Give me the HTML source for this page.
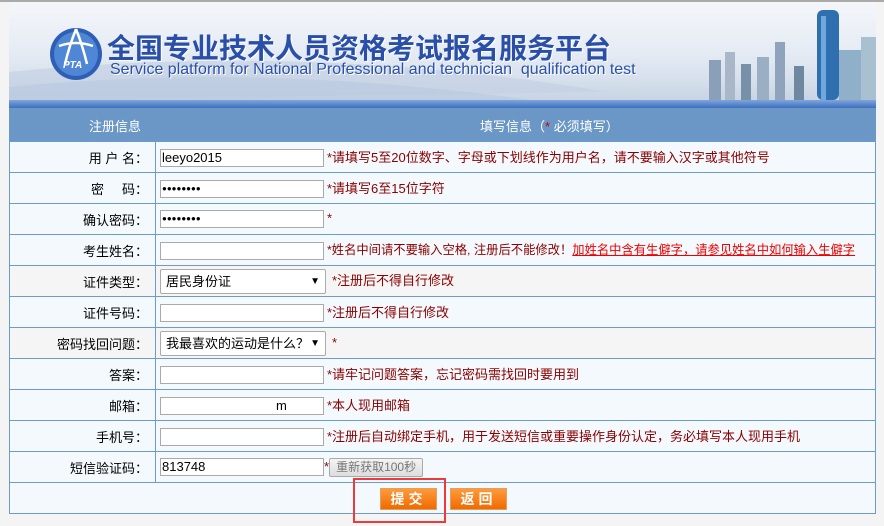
<!DOCTYPE html>
<html><head><meta charset="utf-8"><style>
*{margin:0;padding:0;box-sizing:border-box}
body{width:884px;height:526px;background:#f4f4f4;font-family:"Liberation Sans","Noto Sans CJK SC",sans-serif;font-size:13px;position:relative;overflow:hidden}
#top{position:absolute;left:0;top:0;width:884px;height:2px;background:#aaa}
#ban{position:absolute;left:9px;top:2px;width:867px;height:98px;background:linear-gradient(180deg,#f4f6fa 0%,#e6ecf4 50%,#d6e0ec 80%,#c8d4e4 100%);overflow:hidden}
#strip{position:absolute;left:9px;top:100px;width:867px;height:8px;background:linear-gradient(#7fa6dc,#3e6fc0)}
#hdr{position:absolute;left:9px;top:108px;width:867px;height:33px;background:#6a97c6;color:#fff;font-size:13px}
.t1{position:absolute;left:107px;top:27px;font-size:28px;font-weight:bold;color:#2a4fa8;text-shadow:1px 1px 0 #fff;white-space:nowrap}
.t2{position:absolute;left:110px;top:61px;font-size:16px;color:#2a4fa8;text-shadow:1px 1px 0 #fff;white-space:nowrap}
table{position:absolute;left:9px;top:141px;width:867px;border-collapse:collapse;table-layout:fixed}
td{border:1px solid #6c9bd0;height:31px;background:#f3f9fd;color:#000}
td.l{text-align:right;padding-right:7px}
td.r{padding-left:4px;color:#8b0000;white-space:nowrap;overflow:hidden}
.in{display:inline-block;width:164px;height:18px;border:1px solid #aaa;background:#fff;vertical-align:middle;font-size:13px;line-height:16px;padding-left:1px;color:#000;margin-right:3px}
.sel{display:inline-block;width:166px;height:25px;border:1px solid #aaa;border-radius:2px;background:#fff;vertical-align:middle;font-size:13px;line-height:23px;padding-left:5px;color:#000;position:relative;margin-right:6px}
.sel:after{content:"▼";position:absolute;right:5px;top:0;font-size:10px}
.btn{display:inline-block;height:19px;border:1px solid #aaa;border-radius:2px;background:linear-gradient(#f4f4f4,#ddd);color:#777;font-size:12px;line-height:17px;padding:0 6px;vertical-align:middle}
.ob{position:absolute;top:488px;height:22px;width:57px;background:linear-gradient(#ff9a3a,#f06a00);border:1px solid #e0a060;color:#fff;font-weight:bold;font-size:14px;text-align:center;line-height:20px;letter-spacing:4px}
</style></head><body>
<div id="top"></div>
<div id="ban">
<svg width="867" height="98" style="position:absolute;left:0;top:0">
<path d="M0 70 Q300 40 600 90 L0 98Z" fill="#c5d2e4" opacity=".7"/>
<path d="M0 85 Q250 60 520 98 L0 98Z" fill="#b8c8de" opacity=".6"/>
<rect x="700" y="58" width="12" height="40" fill="#8aa0b8"/><rect x="716" y="50" width="10" height="48" fill="#a8b8c8"/>
<rect x="732" y="62" width="10" height="36" fill="#7890a8"/><rect x="748" y="55" width="12" height="43" fill="#9aaec4"/>
<rect x="766" y="40" width="10" height="58" fill="#8fa4bc"/><rect x="785" y="64" width="10" height="34" fill="#6f879f"/>
<rect x="808" y="8" width="22" height="90" rx="6" fill="#2f6fb0"/><rect x="812" y="14" width="5" height="84" fill="#6fa8dc"/>
<rect x="830" y="48" width="22" height="50" fill="#8fb0c8"/><rect x="852" y="35" width="15" height="63" fill="#a8c0d0"/>
<circle cx="67" cy="52" r="26" fill="#2f5fb5"/><circle cx="67" cy="52" r="22" fill="#4f86d5"/>
<path d="M67 27 Q60 45 56 62 M67 27 Q74 45 78 62 M50 44 Q67 38 84 44" stroke="#fff" stroke-width="2.5" fill="none"/>
<text x="54" y="66" font-size="10" font-weight="bold" fill="#fff" font-family="Liberation Sans" font-style="italic">PTA</text>
</svg>
</div>
<div class="t1">全国专业技术人员资格考试报名服务平台</div>
<div class="t2">Service platform for National Professional and technician&nbsp; qualification test</div>
<div id="strip"></div>
<div id="hdr"><span style="position:absolute;left:80px;top:8px">注册信息</span><span style="position:absolute;left:471px;top:8px">填写信息（<span style="color:#c00">*</span> 必须填写）</span></div>
<table>
<colgroup><col style="width:146px"><col></colgroup>
<tr><td class="l">用&nbsp;户&nbsp;名：</td><td class="r"><span class="in">leeyo2015</span>*请填写5至20位数字、字母或下划线作为用户名，请不要输入汉字或其他符号</td></tr>
<tr><td class="l">密&nbsp;&nbsp;&nbsp;&nbsp;&nbsp;码：</td><td class="r"><span class="in" style="font-size:8px">●●●●●●●●</span>*请填写6至15位字符</td></tr>
<tr><td class="l">确认密码：</td><td class="r"><span class="in" style="font-size:8px">●●●●●●●●</span>*</td></tr>
<tr><td class="l">考生姓名：</td><td class="r" style="font-size:12.3px"><span class="in"></span>*姓名中间请不要输入空格, 注册后不能修改！<span style="color:#e00;text-decoration:underline">加姓名中含有生僻字，请参见姓名中如何输入生僻字</span></td></tr>
<tr><td class="l" style="background:#f5f5f5">证件类型：</td><td class="r" style="background:#f5f5f5"><span class="sel">居民身份证</span>*注册后不得自行修改</td></tr>
<tr><td class="l">证件号码：</td><td class="r"><span class="in"></span>*注册后不得自行修改</td></tr>
<tr><td class="l" style="background:#f5f5f5">密码找回问题：</td><td class="r" style="background:#f5f5f5"><span class="sel">我最喜欢的运动是什么？</span>*</td></tr>
<tr><td class="l">答案：</td><td class="r"><span class="in"></span>*请牢记问题答案，忘记密码需找回时要用到</td></tr>
<tr><td class="l">邮箱：</td><td class="r"><span class="in" style="padding-left:115px">m</span>*本人现用邮箱</td></tr>
<tr><td class="l">手机号：</td><td class="r"><span class="in"></span>*注册后自动绑定手机，用于发送短信或重要操作身份认定，务必填写本人现用手机</td></tr>
<tr><td class="l">短信验证码：</td><td class="r"><span class="in" style="margin-right:0">813748</span>*<span class="btn">重新获取100秒</span></td></tr>
<tr><td colspan="2" style="height:31px;background:#f3f9fd"></td></tr>
</table>
<div style="position:absolute;left:353px;top:478px;width:93px;height:45px;border:2px solid #ee3a3a"></div>
<div class="ob" style="left:380px">提交</div>
<div class="ob" style="left:450px">返回</div>
</body></html>
